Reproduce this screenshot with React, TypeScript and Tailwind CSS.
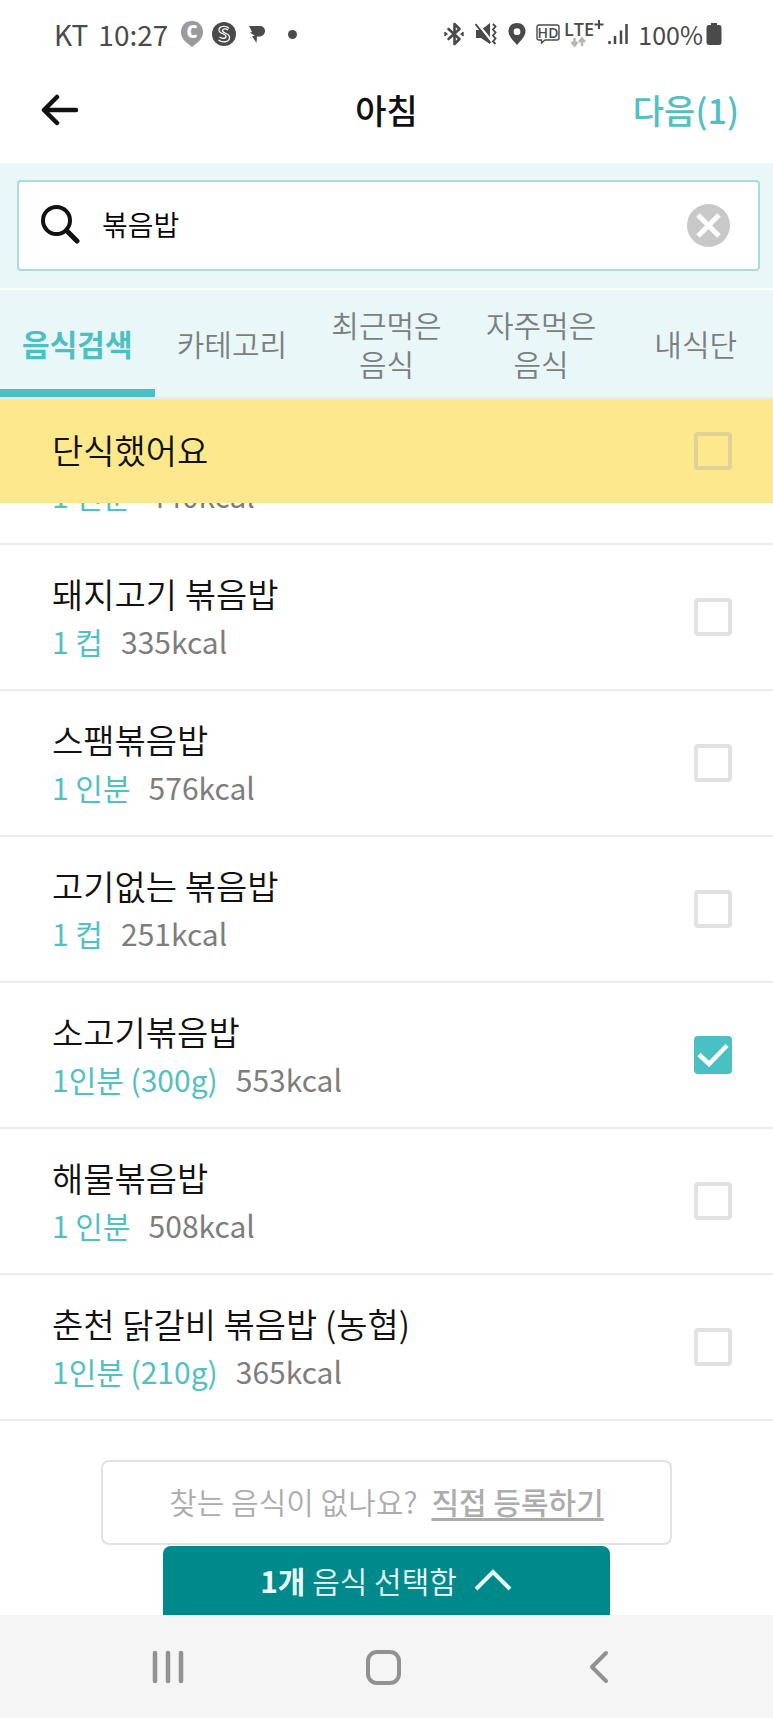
// Breakfast logging screen: food search results with multi-select
import { useState } from "react";

interface Food {
  id: number;
  name: string;
  serving: string;
  kcal: number;
}

const FOODS: Food[] = [
  { id: 1, name: "새우볶음밥", serving: "1 인분", kcal: 440 },
  { id: 2, name: "돼지고기 볶음밥", serving: "1 컵", kcal: 335 },
  { id: 3, name: "스팸볶음밥", serving: "1 인분", kcal: 576 },
  { id: 4, name: "고기없는 볶음밥", serving: "1 컵", kcal: 251 },
  { id: 5, name: "소고기볶음밥", serving: "1인분 (300g)", kcal: 553 },
  { id: 6, name: "해물볶음밥", serving: "1 인분", kcal: 508 },
  { id: 7, name: "춘천 닭갈비 볶음밥 (농협)", serving: "1인분 (210g)", kcal: 365 },
];

const TABS = ["음식검색", "카테고리", "최근먹은 음식", "자주먹은 음식", "내식단"];

function StatusBar() {
  return (
    <div className="flex h-[68px] items-center justify-between pl-[54px] pr-[51px] font-normal text-[#4a4a4a]">
      <div className="flex items-center">
        <span className="text-[28px] leading-none">KT</span>
        <span className="ml-[10px] text-[28px] leading-none">10:27</span>
        <svg className="ml-3 overflow-visible" width="24" height="26" viewBox="0 0 24 26">
          <path d="M12 0C5.400 0 1 4.900 1 11c0 5 3 8.500 6 11l5 4 5-4c3-2.500 6-6 6-11C23 4.900 18.600 0 12 0Z" fill="#9b9b9b" />
          <text x="12" y="17" textAnchor="middle" fontSize="17" fontWeight="800" fill="#fff" fontFamily="Open Sans, sans-serif">C</text>
        </svg>
        <svg className="ml-2" width="24" height="24" viewBox="0 0 24 24">
          <circle cx="12" cy="12" r="12" fill="#4a4a4a" />
          <path d="M17 6.500C15 3.500 7 3.500 7 8c0 4.500 7 3 7 6.500 0 2-4 2.500-6.500.5M6.500 18c3.500 3 11 2.500 11-2.500 0-5-7-3.500-7-7 0-2 3.500-2 5.500-.5" fill="none" stroke="#fff" strokeWidth="1.300" />
        </svg>
        <svg className="ml-3" width="18" height="20" viewBox="0 0 18 20">
          <path d="M1 2h10.500c3.500 0 5.500 2 5.500 5s-2.500 5.500-6 5.500h-2L8.500 19 4 12h3L2 8.500l2-.5L1 2Z" fill="#4a4a4a" />
        </svg>
        <span className="ml-[22px] size-[9px] rounded-full bg-[#4a4a4a]" />
      </div>

      <div className="flex items-center">
        <svg width="20" height="24" viewBox="0 0 20 24" fill="none" stroke="#4a4a4a" strokeWidth="2.600" strokeLinejoin="round" strokeLinecap="round">
          <path d="M4.500 7l11 10-5 5V2l5 5-11 10" />
          <path d="M1 10.500l2 1.500-2 1.500ZM19 10.500L17 12l2 1.500Z" fill="#4a4a4a" strokeWidth="1.500" />
        </svg>
        <svg className="ml-[11px]" width="22" height="22" viewBox="0 0 22 22">
          <path d="M1 7h5l9-7v21l-9-6H1Z" fill="#4a4a4a" />
          <path d="M2 0l16 20" stroke="#fff" strokeWidth="2.500" />
          <path d="M.5 1l15 19" stroke="#4a4a4a" strokeWidth="2" />
          <path d="M18 1l2.500 2.500-2.500 3 2.500 3-2.500 3 2.500 3-2.500 3 2.500 2.500" fill="none" stroke="#4a4a4a" strokeWidth="1.900" />
        </svg>
        <svg className="ml-[11px]" width="18" height="22" viewBox="0 0 18 22">
          <path fillRule="evenodd" d="M9 0C4 0 .5 3.500.5 8.300.5 13 5 17.500 9 22c4-4.500 8.500-9 8.500-13.700C17.500 3.500 14 0 9 0Zm0 5.300a3.400 3.400 0 1 1 0 6.800 3.400 3.400 0 0 1 0-6.800Z" fill="#4a4a4a" />
        </svg>
        <svg className="ml-[10px] overflow-visible" width="24" height="20" viewBox="0 0 24 20">
          <path d="M3 1h18q2 0 2 2v11q0 2-2 2H9l-3.500 3v-3H3q-2 0-2-2V3q0-2 2-2Z" fill="none" stroke="#4a4a4a" strokeWidth="1.400" />
          <text x="12" y="13.500" textAnchor="middle" fontSize="14" fontWeight="600" fill="#4a4a4a" fontFamily="Open Sans, sans-serif">HD</text>
        </svg>
        <svg className="ml-1 overflow-visible" width="40" height="28" viewBox="0 0 40 28">
          <text x="0" y="16" fontSize="18" fontWeight="600" fill="#4a4a4a" fontFamily="Open Sans, sans-serif">LTE</text>
          <path d="M35 0v9M30.500 4.500h9" stroke="#4a4a4a" strokeWidth="2" />
          <path d="M10.500 18v7M7.500 22l3 3.500 3-3.500M18 26v-7M15 22l3-3.500 3 3.500" fill="none" stroke="#b5b5b5" strokeWidth="2.500" />
        </svg>
        <svg className="ml-1" width="20" height="22" viewBox="0 0 20 22" stroke="#4a4a4a" strokeWidth="2.500">
          <path d="M1.500 21v-3M7 21v-8M13 21V7.500M18.500 21V1" />
        </svg>
        <span className="ml-[10px] text-[25px] leading-none">100%</span>
        <svg className="ml-[3px]" width="16" height="24" viewBox="0 0 16 24">
          <path d="M5 1h6v2h2q2.500 0 2.500 3v14q0 3-2.500 3H3Q.5 23 .5 20V6q0-3 2.500-3h2Z" fill="#4a4a4a" />
        </svg>
      </div>
    </div>
  );
}

interface CheckProps {
  id: string;
  checked: boolean;
  onChange: () => void;
}

function Check({ id, checked, onChange }: CheckProps) {
  return (
    <span className="relative size-[38px] shrink-0">
      <input
        id={id}
        type="checkbox"
        checked={checked}
        onChange={onChange}
        className="block size-full appearance-none rounded border-4 border-[#aaaaaa]/35 checked:border-[#48c0c4] checked:bg-[#48c0c4]"
      />
      {checked && (
        <svg className="pointer-events-none absolute inset-0" width="38" height="38" viewBox="0 0 38 38">
          <path d="M5 18.500l10 9.500L33 9.500" fill="none" stroke="#fff" strokeWidth="4.500" />
        </svg>
      )}
    </span>
  );
}

export default function App() {
  const [query, setQuery] = useState("볶음밥");
  const [tab, setTab] = useState(0);
  const [fasted, setFasted] = useState(false);
  const [selected, setSelected] = useState<number[]>([5]);

  function toggle(id: number) {
    setSelected((prev) => (prev.includes(id) ? prev.filter((x) => x !== id) : [...prev, id]));
  }

  return (
    <div className="flex min-h-screen flex-col bg-white font-['Noto_Sans_CJK_KR',sans-serif] font-[350] text-[#111]">
      <StatusBar />

      <header className="grid h-[95px] grid-cols-3 items-center px-[34px] pb-3">
        <button type="button" aria-label="뒤로" className="pl-1.5">
          <svg width="40" height="32" viewBox="0 0 40 32" fill="none" stroke="#111" strokeWidth="4.500" strokeLinecap="round" strokeLinejoin="round">
            <path d="M17 3L4 16l13 13M4 16h32" />
          </svg>
        </button>
        <h1 className="text-center text-[34px] font-medium leading-[48px]">아침</h1>
        <button type="button" className="text-right text-[34px] font-medium leading-[48px] text-[#54bfc1]">
          다음({selected.length})
        </button>
      </header>

      <div className="border-b-2 border-white bg-[#eaf7f9] pb-[17px] pl-[17px] pr-[13px] pt-[17px]">
        <div className="flex h-[91px] items-center rounded border-2 border-[#a9dcdb] bg-white pl-[21px] pr-7">
          <svg className="mb-1 shrink-0" width="40" height="40" viewBox="0 0 40 40" fill="none" stroke="#111" strokeLinecap="round">
            <circle cx="16.500" cy="16.500" r="13.500" strokeWidth="4" />
            <path d="M26.500 26.500L37 37" strokeWidth="5" />
          </svg>
          <input
            type="text"
            aria-label="음식 검색"
            value={query}
            onChange={(e) => setQuery(e.target.value)}
            className="mb-1 ml-[22px] min-w-0 flex-1 text-[28px] leading-10 text-black outline-none"
          />
          <button type="button" aria-label="지우기" onClick={() => setQuery("")}>
            <svg width="43" height="43" viewBox="0 0 43 43">
              <circle cx="21.500" cy="21.500" r="21.500" fill="#c8c8c8" />
              <path d="M11 11l21 21M32 11L11 32" stroke="#fff" strokeWidth="5" />
            </svg>
          </button>
        </div>
      </div>

      <nav className="grid h-[109px] grid-cols-5 border-b-2 border-[#e9ece4] bg-[#eaf7f9]">
        {TABS.map((label, i) => (
          <button
            key={label}
            type="button"
            onClick={() => setTab(i)}
            className={
              i === tab
                ? "break-keep border-b-8 border-[#4bc0c2] pt-2 text-[30px] font-bold leading-[39px] text-[#4bc0c2]"
                : "break-keep border-b-8 border-transparent pt-2 text-[30px] leading-[39px] text-[#7a7f80]"
            }
          >
            {label}
          </button>
        ))}
      </nav>

      <label htmlFor="fasted" className="flex h-[104px] items-center justify-between bg-[#fde88c] pl-[52px] pr-[41px]">
        <span className="pb-[3px] text-[34px] leading-[48px]">단식했어요</span>
        <Check id="fasted" checked={fasted} onChange={() => setFasted(!fasted)} />
      </label>

      {/* the list is scrolled, only the bottom of its first row shows */}
      <div className="overflow-hidden">
        <ul className="-mt-[104px]">
          {FOODS.map((food) => (
            <li key={food.id} className="border-b-2 border-[#ebebeb]">
              <label htmlFor={`food-${food.id}`} className="flex h-36 items-center justify-between pl-[52px] pr-[41px]">
                <span>
                  <span className="block text-[34px] leading-[48px]">{food.name}</span>
                  <span className="flex gap-[18px] text-[30px] font-normal leading-[46px]">
                    <span className="text-[#54bfc1]">{food.serving}</span>
                    <span className="text-[#7d7d7d]">{food.kcal}kcal</span>
                  </span>
                </span>
                <Check
                  id={`food-${food.id}`}
                  checked={selected.includes(food.id)}
                  onChange={() => toggle(food.id)}
                />
              </label>
            </li>
          ))}
        </ul>
      </div>

      <div className="mx-[101px] mt-[39px] flex h-[85px] items-center justify-center gap-[14px] rounded-lg border-2 border-[#e2e2e2] pb-1 text-[30px] leading-[48px] text-[#acacac]">
        <span>찾는 음식이 없나요?</span>
        <a href="#register" className="font-medium underline decoration-[3px] underline-offset-4">
          직접 등록하기
        </a>
      </div>

      <button
        type="button"
        className="mx-[163px] mt-auto flex h-[69px] items-center justify-center gap-4 rounded-t-lg bg-[#00898b] pb-0.5 text-[30px] leading-[48px] text-[#eaffff]"
      >
        <span>
          <b>{selected.length}개</b> 음식 선택함
        </span>
        <svg width="40" height="26" viewBox="0 0 40 26" fill="none" stroke="#eaffff" strokeWidth="4">
          <path d="M3 22L20 5l17 17" />
        </svg>
      </button>

      <footer className="grid h-[103px] grid-cols-3 items-center justify-items-center bg-[#f5f5f5] pl-[60px] pr-[66px]">
        <button type="button" aria-label="최근 앱">
          <svg width="32" height="34" viewBox="0 0 32 34" stroke="#919191" strokeWidth="4.500" strokeLinecap="round">
            <path d="M3 3v28M16 3v28M29 3v28" />
          </svg>
        </button>
        <button type="button" aria-label="홈">
          <svg width="36" height="36" viewBox="0 0 36 36" fill="none" stroke="#919191" strokeWidth="4">
            <rect x="3" y="3" width="31" height="31" rx="9" />
          </svg>
        </button>
        <button type="button" aria-label="뒤로 가기">
          <svg width="20" height="34" viewBox="0 0 20 34" fill="none" stroke="#919191" strokeWidth="4" strokeLinecap="round" strokeLinejoin="round">
            <path d="M17 3L3 17l14 14" />
          </svg>
        </button>
      </footer>
    </div>
  );
}
